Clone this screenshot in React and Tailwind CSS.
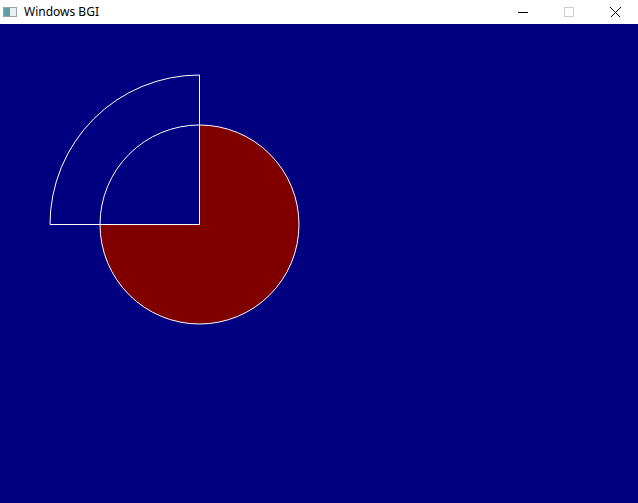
import React from 'react';

const TitleBar = () => (
  <div className="h-6 flex items-center bg-white select-none">
    {/* App icon */}
    <div className="ml-[3px] w-[14px] h-[10px] border border-[#9aa3ab] flex">
      <div className="w-[6px] bg-[#5e9ea6]" />
      <div className="flex-1 bg-[#e9eef0]" />
    </div>
    <span
      className="ml-[7px] text-[12px] text-black leading-none"
      style={{ fontFamily: '"Segoe UI", "Noto Sans", "Open Sans", sans-serif' }}
    >
      Windows BGI
    </span>

    {/* Window controls */}
    <div className="ml-auto flex h-full">
      <div className="w-[46px] flex items-center justify-center">
        <div className="w-[10px] h-px bg-black" />
      </div>
      <div className="w-[46px] flex items-center justify-center">
        <div className="w-[10px] h-[10px] border border-[#cccccc]" />
      </div>
      <div className="w-[46px] flex items-center justify-center">
        <svg width="11" height="11" viewBox="0 0 11 11" shapeRendering="crispEdges">
          <path d="M0.5 0.5 L10.5 10.5 M10.5 0.5 L0.5 10.5" stroke="black" strokeWidth="1" />
        </svg>
      </div>
    </div>
  </div>
);

const Canvas = () => (
  <div className="flex-1 bg-[#000080] overflow-hidden">
    <svg width="638" height="479" viewBox="0 0 638 479" className="block">
      {/* filled sector: top -> right -> bottom -> left */}
      <path d="M199.5 200.5 L199.5 101 A99.5 99.5 0 1 1 100 200.5 Z" fill="#800000" />
      <circle cx="199.5" cy="200.5" r="99.5" fill="none" stroke="white" strokeWidth="1" />
      {/* outlined pie slice 90..180 */}
      <path
        d="M199.5 200.5 L199.5 51 A149.5 149.5 0 0 0 50 200.5 Z"
        fill="none"
        stroke="white"
        strokeWidth="1"
      />
    </svg>
  </div>
);

export default function App() {
  return (
    <div className="w-[638px] h-[503px] flex flex-col overflow-hidden">
      <TitleBar />
      <Canvas />
    </div>
  );
}
